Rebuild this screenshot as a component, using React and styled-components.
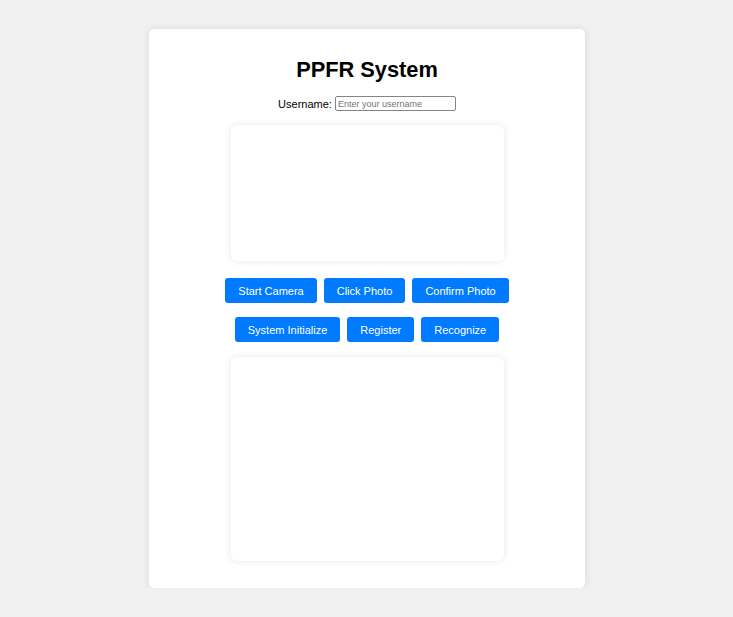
import React, { useState } from 'react'
import styled, { createGlobalStyle } from 'styled-components'

const GlobalStyle = createGlobalStyle`
  body {
    margin: 0;
    background: #f0f0f0;
    font-family: "Liberation Sans", Arial, sans-serif;
  }
`

const Page = styled.div`
  display: flex;
  justify-content: center;
  padding-top: 29px;
  padding-left: 1px;
`

const Card = styled.div`
  width: 436px;
  box-sizing: border-box;
  background: #fff;
  border-radius: 5px;
  box-shadow: 0 0 7px rgba(0, 0, 0, 0.1);
  padding: 28px 27px 27px;
  display: flex;
  flex-direction: column;
  align-items: center;
`

const Title = styled.h1`
  margin: 0 0 14px;
  font-size: 21.8px;
  line-height: 25px;
  font-weight: bold;
  color: #000;
`

const UserRow = styled.div`
  display: flex;
  align-items: center;
  gap: 3px;
  height: 15px;
  font-size: 11px;
  color: #000;
`

const Input = styled.input`
  width: 121px;
  height: 15px;
  box-sizing: border-box;
  border: 1px solid #858585;
  border-radius: 2px;
  padding: 0 2px;
  font-family: "Liberation Sans", Arial, sans-serif;
  font-size: 9px;
  outline: none;
  &::placeholder {
    color: #757575;
  }
`

const Screen = styled.div`
  width: 273px;
  height: ${(p) => p.h}px;
  margin-top: ${(p) => p.mt}px;
  background: #fff;
  border-radius: 6px;
  box-shadow: 0 0 7px rgba(0, 0, 0, 0.1);
`

const Controls = styled.div`
  margin-top: 17px;
  display: flex;
  flex-direction: column;
  gap: 14px;
`

const ButtonRow = styled.div`
  display: flex;
  justify-content: center;
  gap: 7px;
`

const Button = styled.button`
  height: 25px;
  padding: 0 13px;
  border: none;
  border-radius: 3px;
  background: #007bff;
  color: #fff;
  font-family: "Liberation Sans", Arial, sans-serif;
  font-size: 11px;
  cursor: pointer;
`

const App = () => {
  const [username, setUsername] = useState('')

  return (
    <>
      <GlobalStyle />
      <Page>
        <Card>
          <Title>PPFR System</Title>
          <UserRow>
            <label htmlFor="username">Username:</label>
            <Input
              id="username"
              placeholder="Enter your username"
              value={username}
              onChange={(e) => setUsername(e.target.value)}
            />
          </UserRow>
          <Screen h={136} mt={14} />
          <Controls>
            <ButtonRow>
              <Button>Start Camera</Button>
              <Button>Click Photo</Button>
              <Button>Confirm Photo</Button>
            </ButtonRow>
            <ButtonRow>
              <Button>System Initialize</Button>
              <Button>Register</Button>
              <Button>Recognize</Button>
            </ButtonRow>
          </Controls>
          <Screen h={204} mt={15} />
        </Card>
      </Page>
    </>
  )
}

export default App
